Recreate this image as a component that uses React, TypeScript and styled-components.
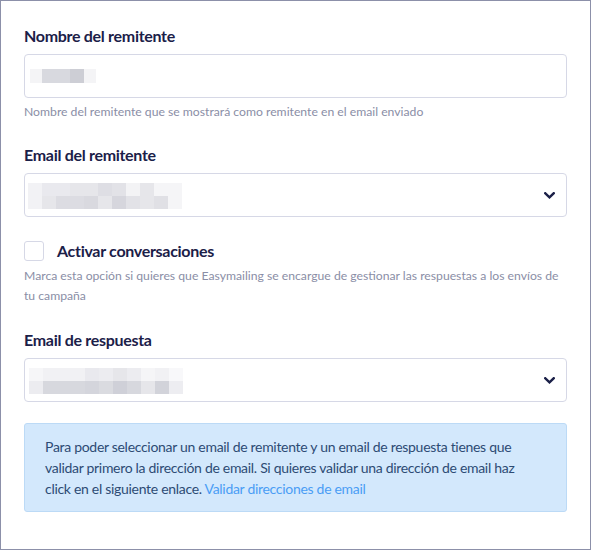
import React from "react";
import styled, { createGlobalStyle } from "styled-components";

const Global = createGlobalStyle`
  html, body { margin: 0; padding: 0; background: #ffffff; }
  body { font-family: "Lato", "Noto Sans", sans-serif; }
  * { box-sizing: border-box; }
`;

const Frame = styled.div`
  width: 591px;
  height: 550px;
  border: 1px solid #8c90a9;
  background: #ffffff;
  padding: 23px 23px 0 23px;
  display: flex;
  flex-direction: column;
`;

const Field = styled.div<{ $mt?: number }>`
  display: flex;
  flex-direction: column;
  margin-top: ${(p) => p.$mt ?? 0}px;
`;

const Label = styled.label`
  font-size: 16px;
  line-height: 24px;
  font-weight: 700;
  letter-spacing: -0.3px;
  color: #1b2048;
  margin-bottom: 6px;
`;

const Box = styled.div`
  height: 44px;
  border: 1px solid #d6d8e6;
  border-radius: 4px;
  display: flex;
  align-items: center;
  justify-content: space-between;
  padding: 0 11px 0 0;
  background: #fff;
`;

const Pixels = styled.div<{ $template: string; $row: number; $indent: number; $dy?: number }>`
  display: grid;
  grid-template-columns: ${(p) => p.$template};
  grid-auto-rows: ${(p) => p.$row}px;
  margin-left: ${(p) => p.$indent}px;
  margin-top: ${(p) => p.$dy ?? 0}px;
`;

const Cell = styled.span<{ $c: string }>`
  background: ${(p) => p.$c};
`;

const Help = styled.p`
  margin: 5px 0 0;
  font-size: 12.2px;
  line-height: 18px;
  color: #8a8ea6;
`;

const CheckRow = styled.label`
  display: flex;
  align-items: center;
  gap: 13px;
  margin-top: 24px;
  font-size: 16px;
  font-weight: 700;
  letter-spacing: -0.3px;
  color: #1b2048;
  line-height: 20px;
`;

const CheckBox = styled.span`
  flex: none;
  width: 20px;
  height: 20px;
  border: 1px solid #d6d8e6;
  border-radius: 3px;
  background: #fff;
`;

const LongHelp = styled.p`
  margin: 5px 0 0;
  font-size: 12.2px;
  line-height: 20px;
  color: #8a8ea6;
`;

const Info = styled.div`
  margin-top: 21px;
  background: #d3e8fc;
  border: 1px solid #bcdaf6;
  border-radius: 3px;
  padding: 12px 36px 12px 20px;
  font-size: 14px;
  letter-spacing: -0.3px;
  line-height: 21px;
  color: #2d4b74;
`;

const Link = styled.a`
  color: #4a9df5;
  text-decoration: none;
`;

const Chevron = () => (
  <svg width="11" height="7" viewBox="0 0 11 7" aria-hidden>
    <path d="M1.3 1.3 L5.5 5.3 L9.7 1.3" fill="none" stroke="#1b2048" strokeWidth="2.5" strokeLinecap="square" />
  </svg>
);

const shadesA = ["#f4f4f6", "#d8d9df", "#d8d9df", "#cdced5", "#f4f4f6"];
const shadesB = [
  "#f2f2f5", "#e9e9ee", "#e9e9ee", "#e6e6ea", "#e6e6ea", "#dedee4", "#e2e2e7", "#f3f3f5", "#e6e6ea", "#f5f5f7", "#f5f5f7",
  "#f2f2f5", "#e6e6ea", "#dcdce2", "#dcdce2", "#d9d9df", "#e6e6ea", "#d6d6dd", "#e2e2e7", "#e6e6ea", "#e0e0e5", "#f5f5f7",
];
const shadesC = [
  "#f6f6f8", "#f1f1f4", "#f1f1f4", "#f1f1f4", "#e9e9ee", "#ececf0", "#e6e6ea", "#ececf0", "#f5f5f7", "#f1f1f4", "#f8f8fa",
  "#ececf0", "#d7d8de", "#d7d8de", "#d7d8de", "#d4d5dc", "#dadbe0", "#cfd0d8", "#d7d8de", "#e6e6ea", "#d2d3da", "#ededf1",
];

const wide = "repeat(11, 14px)";

export default function App() {
  return (
    <>
      <Global />
      <Frame>
        <Field>
          <Label>Nombre del remitente</Label>
          <Box>
            <Pixels $template="12px 14px 14px 14px 12px" $row={14} $indent={5}>
              {shadesA.map((c, i) => (
                <Cell key={i} $c={c} />
              ))}
            </Pixels>
          </Box>
          <Help>Nombre del remitente que se mostrará como remitente en el email enviado</Help>
        </Field>

        <Field $mt={22}>
          <Label>Email del remitente</Label>
          <Box>
            <Pixels $template={wide} $row={13} $indent={3} $dy={2}>
              {shadesB.map((c, i) => (
                <Cell key={i} $c={c} />
              ))}
            </Pixels>
            <Chevron />
          </Box>
        </Field>

        <CheckRow>
          <CheckBox />
          Activar conversaciones
        </CheckRow>
        <LongHelp>
          Marca esta opción si quieres que Easymailing se encargue de gestionar las respuestas a los envíos de
          <br />
          tu campaña
        </LongHelp>

        <Field $mt={22}>
          <Label>Email de respuesta</Label>
          <Box>
            <Pixels $template={wide} $row={13} $indent={4} $dy={1}>
              {shadesC.map((c, i) => (
                <Cell key={i} $c={c} />
              ))}
            </Pixels>
            <Chevron />
          </Box>
        </Field>

        <Info>
          Para poder seleccionar un email de remitente y un email de respuesta tienes que validar primero la dirección de
          email. Si quieres validar una dirección de email haz click en el siguiente enlace.{" "}
          <Link href="#">Validar direcciones de email</Link>
        </Info>
      </Frame>
    </>
  );
}
